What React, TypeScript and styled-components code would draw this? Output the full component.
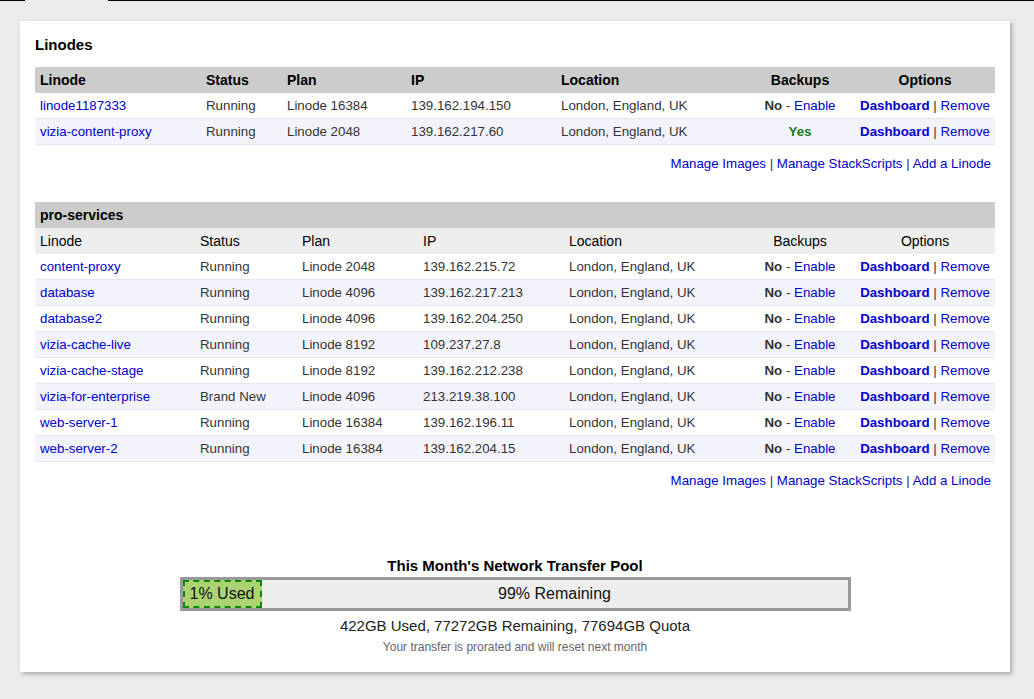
import React from "react";
import styled, { createGlobalStyle } from "styled-components";

const GlobalStyle = createGlobalStyle`
  html, body { margin: 0; padding: 0; background: #ebebeb; }
  body { font-family: "Liberation Sans", Arial, Helvetica, sans-serif; color: #222; }
  * { box-sizing: border-box; }
`;

const Page = styled.div`
  width: 1034px;
  min-height: 699px;
  background: #ebebeb;
`;

const TopRule = styled.div`
  display: flex;
  height: 1px;
`;

const RuleSeg = styled.div<{ $w?: number; $tab?: boolean }>`
  flex: ${(p) => (p.$w ? `0 0 ${p.$w}px` : "1")};
  background: ${(p) => (p.$tab ? "#ebebeb" : "#000")};
`;

const Card = styled.div`
  margin: 20px 0 0 20px;
  width: 990px;
  height: 651px;
  background: #fff;
  box-shadow: 2px 2px 4px rgba(0, 0, 0, 0.28);
  padding: 14px 15px 19px 15px;
  display: flex;
  flex-direction: column;
`;

const Heading = styled.h2`
  margin: 0 0 12px 0;
  font-size: 15px;
  line-height: 20px;
  font-weight: bold;
  color: #000;
`;

const Table = styled.table`
  width: 960px;
  border-collapse: collapse;
  table-layout: fixed;
  font-size: 13.3px;
`;

const HeadRow = styled.tr<{ $variant: "dark" | "light" }>`
  height: 26px;
  background: ${(p) => (p.$variant === "dark" ? "#cccccc" : "#eeeeee")};
`;

const Th = styled.th<{ $align?: string; $bold?: boolean }>`
  padding: 0 5px;
  text-align: ${(p) => p.$align || "left"};
  font-size: 14px;
  font-weight: ${(p) => (p.$bold ? "bold" : "normal")};
  color: #000;
  white-space: nowrap;
`;

const Row = styled.tr<{ $alt: boolean }>`
  height: 26px;
  background: ${(p) => (p.$alt ? "#f3f3fb" : "#fff")};
`;

const Td = styled.td<{ $align?: string }>`
  padding: 0 5px 2px 5px;
  text-align: ${(p) => p.$align || "left"};
  color: #333;
  white-space: nowrap;
  box-shadow: inset 0 -1px 0 #e6e6ee;
`;

const Link = styled.a<{ $bold?: boolean }>`
  color: #0000cc;
  text-decoration: none;
  font-weight: ${(p) => (p.$bold ? "bold" : "normal")};
`;

const Strong = styled.span<{ $green?: boolean }>`
  font-weight: bold;
  color: ${(p) => (p.$green ? "#1a7a1a" : "#333")};
`;

const Sep = styled.span`
  color: #333;
`;

const LinksLine = styled.div<{ $after: number }>`
  margin: 10px 0 ${(p) => p.$after}px 0;
  text-align: right;
  padding-right: 4px;
  font-size: 13.3px;
  line-height: 18px;
`;

const Pool = styled.div`
  display: flex;
  flex-direction: column;
  align-items: center;
`;

const PoolTitle = styled.div`
  font-size: 15px;
  font-weight: bold;
  line-height: 18px;
  color: #000;
  margin-bottom: 2px;
`;

const Bar = styled.div`
  width: 671px;
  height: 34px;
  border: 3px solid #999;
  background: #eee;
  display: flex;
  font-size: 16px;
  color: #111;
`;

const Used = styled.div`
  width: 79px;
  background: #acd373;
  border: 2px dashed #0a870a;
  padding-left: 5px;
  display: flex;
  align-items: center;
  white-space: nowrap;
`;

const Remaining = styled.div`
  flex: 1;
  display: flex;
  align-items: center;
  justify-content: center;
`;

const Stats = styled.div`
  margin-top: 6px;
  font-size: 15px;
  line-height: 18px;
  color: #222;
`;

const Note = styled.div`
  margin-top: 5px;
  font-size: 12px;
  line-height: 14px;
  color: #666;
`;

type Node = { name: string; status: string; plan: string; ip: string; backup: boolean };

const top: Node[] = [
  { name: "linode1187333", status: "Running", plan: "Linode 16384", ip: "139.162.194.150", backup: false },
  { name: "vizia-content-proxy", status: "Running", plan: "Linode 2048", ip: "139.162.217.60", backup: true },
];

const pro: Node[] = [
  { name: "content-proxy", status: "Running", plan: "Linode 2048", ip: "139.162.215.72", backup: false },
  { name: "database", status: "Running", plan: "Linode 4096", ip: "139.162.217.213", backup: false },
  { name: "database2", status: "Running", plan: "Linode 4096", ip: "139.162.204.250", backup: false },
  { name: "vizia-cache-live", status: "Running", plan: "Linode 8192", ip: "109.237.27.8", backup: false },
  { name: "vizia-cache-stage", status: "Running", plan: "Linode 8192", ip: "139.162.212.238", backup: false },
  { name: "vizia-for-enterprise", status: "Brand New", plan: "Linode 4096", ip: "213.219.38.100", backup: false },
  { name: "web-server-1", status: "Running", plan: "Linode 16384", ip: "139.162.196.11", backup: false },
  { name: "web-server-2", status: "Running", plan: "Linode 16384", ip: "139.162.204.15", backup: false },
];

const headers = ["Linode", "Status", "Plan", "IP", "Location", "Backups", "Options"];

function Rows({ nodes }: { nodes: Node[] }) {
  return (
    <>
      {nodes.map((n, i) => (
        <Row key={n.name} $alt={i % 2 === 1}>
          <Td><Link href="#">{n.name}</Link></Td>
          <Td>{n.status}</Td>
          <Td>{n.plan}</Td>
          <Td>{n.ip}</Td>
          <Td>London, England, UK</Td>
          <Td $align="center">
            {n.backup ? (
              <Strong $green>Yes</Strong>
            ) : (
              <>
                <Strong>No</Strong> <Sep>-</Sep> <Link href="#">Enable</Link>
              </>
            )}
          </Td>
          <Td $align="center">
            <Link href="#" $bold>Dashboard</Link> <Sep>|</Sep> <Link href="#">Remove</Link>
          </Td>
        </Row>
      ))}
    </>
  );
}

function Cols({ widths }: { widths: number[] }) {
  return (
    <colgroup>
      {widths.map((w, i) => (
        <col key={i} style={{ width: w }} />
      ))}
    </colgroup>
  );
}

function Links({ after }: { after: number }) {
  return (
    <LinksLine $after={after}>
      <Link href="#">Manage Images</Link> <Sep>|</Sep> <Link href="#">Manage StackScripts</Link>{" "}
      <Sep>|</Sep> <Link href="#">Add a Linode</Link>
    </LinksLine>
  );
}

export default function App() {
  return (
    <Page>
      <GlobalStyle />
      <TopRule>
        <RuleSeg $w={25} />
        <RuleSeg $w={83} $tab />
        <RuleSeg />
      </TopRule>
      <Card>
        <Heading>Linodes</Heading>
        <Table>
          <Cols widths={[166, 81, 124, 150, 189, 110, 140]} />
          <thead>
            <HeadRow $variant="dark">
              {headers.map((h, i) => (
                <Th key={h} $bold $align={i >= 5 ? "center" : "left"}>{h}</Th>
              ))}
            </HeadRow>
          </thead>
          <tbody>
            <Rows nodes={top} />
          </tbody>
        </Table>
        <Links after={29} />
        <Table>
          <Cols widths={[160, 102, 121, 146, 181, 110, 140]} />
          <thead>
            <HeadRow $variant="dark">
              <Th $bold colSpan={7}>pro-services</Th>
            </HeadRow>
            <HeadRow $variant="light">
              {headers.map((h, i) => (
                <Th key={h} $align={i >= 5 ? "center" : "left"}>{h}</Th>
              ))}
            </HeadRow>
          </thead>
          <tbody>
            <Rows nodes={pro} />
          </tbody>
        </Table>
        <Links after={67} />
        <Pool>
          <PoolTitle>This Month's Network Transfer Pool</PoolTitle>
          <Bar>
            <Used>1% Used</Used>
            <Remaining>99% Remaining</Remaining>
          </Bar>
          <Stats>422GB Used, 77272GB Remaining, 77694GB Quota</Stats>
          <Note>Your transfer is prorated and will reset next month</Note>
        </Pool>
      </Card>
    </Page>
  );
}
